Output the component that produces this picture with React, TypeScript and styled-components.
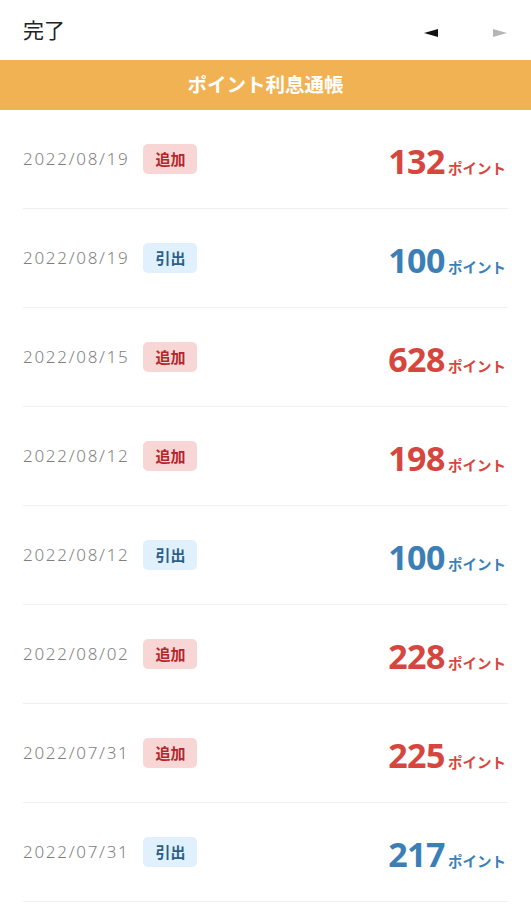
import styled, { createGlobalStyle } from 'styled-components'

type Kind = 'add' | 'withdraw'

interface Entry {
  date: string
  kind: Kind
  points: number
}

const entries: Entry[] = [
  { date: '2022/08/19', kind: 'add', points: 132 },
  { date: '2022/08/19', kind: 'withdraw', points: 100 },
  { date: '2022/08/15', kind: 'add', points: 628 },
  { date: '2022/08/12', kind: 'add', points: 198 },
  { date: '2022/08/12', kind: 'withdraw', points: 100 },
  { date: '2022/08/02', kind: 'add', points: 228 },
  { date: '2022/07/31', kind: 'add', points: 225 },
  { date: '2022/07/31', kind: 'withdraw', points: 217 },
]

const colors = {
  orange: '#f0b252',
  red: '#d5473e',
  blue: '#3b7fb6',
  gray: '#7f7f7f',
  line: '#f0f0f0',
}

const GlobalStyle = createGlobalStyle`
  html, body {
    margin: 0;
    padding: 0;
    background: #fff;
  }
  body {
    font-family: 'Noto Sans', 'Noto Sans CJK JP', sans-serif;
  }
`

function App() {
  return (
    <>
      <GlobalStyle />
      <Page>
        <TopBar>
          <DoneButton>完了</DoneButton>
          <Arrows>
            <ArrowButton>
              <Triangle $dir="left" $active />
            </ArrowButton>
            <ArrowButton>
              <Triangle $dir="right" />
            </ArrowButton>
          </Arrows>
        </TopBar>
        <Banner>ポイント利息通帳</Banner>
        <List>
          {entries.map((entry, i) => (
            <Row key={i}>
              <LeftGroup>
                <DateText>{entry.date}</DateText>
                <Badge $kind={entry.kind}>{entry.kind === 'add' ? '追加' : '引出'}</Badge>
              </LeftGroup>
              <Amount $kind={entry.kind}>
                <Number>{entry.points}</Number>
                <Unit>ポイント</Unit>
              </Amount>
            </Row>
          ))}
        </List>
      </Page>
    </>
  )
}

const Page = styled.div`
  width: 531px;
  display: flex;
  flex-direction: column;
`

const TopBar = styled.div`
  height: 60px;
  display: flex;
  align-items: center;
  justify-content: space-between;
  padding: 0 24px 0 23px;
  box-sizing: border-box;
`

const DoneButton = styled.button`
  background: none;
  border: none;
  padding: 0;
  font-family: 'Noto Sans CJK JP', sans-serif;
  font-size: 21px;
  color: #222;
  line-height: 1;
  margin-top: -2px;
`

const Arrows = styled.div`
  display: flex;
  align-items: center;
  gap: 55px;
  margin-top: 5px;
`

const ArrowButton = styled.button`
  background: none;
  border: none;
  padding: 0;
  width: 14px;
  height: 10px;
  display: flex;
  align-items: center;
  justify-content: center;
`

const Triangle = styled.span<{ $dir: 'left' | 'right'; $active?: boolean }>`
  width: 0;
  height: 0;
  border-top: 4px solid transparent;
  border-bottom: 4px solid transparent;
  ${({ $dir, $active }) =>
    $dir === 'left'
      ? `border-right: 14px solid ${$active ? '#111' : '#aaa'};`
      : `border-left: 14px solid ${$active ? '#111' : '#b5b5b5'};`}
`

const Banner = styled.div`
  height: 50px;
  background: ${colors.orange};
  color: #fff;
  font-family: 'Noto Sans CJK JP', sans-serif;
  font-weight: 700;
  font-size: 19.5px;
  display: flex;
  align-items: center;
  justify-content: center;
  padding-bottom: 4px;
  box-sizing: border-box;
`

const List = styled.div`
  display: flex;
  flex-direction: column;
  padding: 0 23px;
`

const Row = styled.div`
  height: 99px;
  display: flex;
  align-items: center;
  justify-content: space-between;
  border-bottom: 1px solid ${colors.line};
  box-sizing: border-box;
  padding-right: 2px;
`

const LeftGroup = styled.div`
  display: flex;
  align-items: center;
  gap: 15px;
  margin-top: -1px;
`

const DateText = styled.span`
  font-family: 'Noto Sans', sans-serif;
  font-size: 17px;
  font-weight: 300;
  color: ${colors.gray};
  letter-spacing: 1.7px;
  margin-right: -1px;
`

const Badge = styled.span<{ $kind: Kind }>`
  width: 54px;
  height: 30px;
  border-radius: 5px;
  display: flex;
  align-items: center;
  justify-content: center;
  font-family: 'Noto Sans CJK JP', sans-serif;
  font-size: 15px;
  font-weight: 700;
  background: ${({ $kind }) => ($kind === 'add' ? '#f9d6d6' : '#e0f0fc')};
  color: ${({ $kind }) => ($kind === 'add' ? '#b3262a' : '#2d5f86')};
`

const Amount = styled.div<{ $kind: Kind }>`
  display: flex;
  align-items: baseline;
  gap: 3px;
  color: ${({ $kind }) => ($kind === 'add' ? colors.red : colors.blue)};
  margin-top: 4px;
`

const Number = styled.span`
  font-family: 'Noto Sans', sans-serif;
  font-size: 34px;
  font-weight: 700;
  letter-spacing: -0.5px;
`

const Unit = styled.span`
  font-family: 'Noto Sans CJK JP', sans-serif;
  font-size: 14.5px;
  font-weight: 700;
`

export default App
